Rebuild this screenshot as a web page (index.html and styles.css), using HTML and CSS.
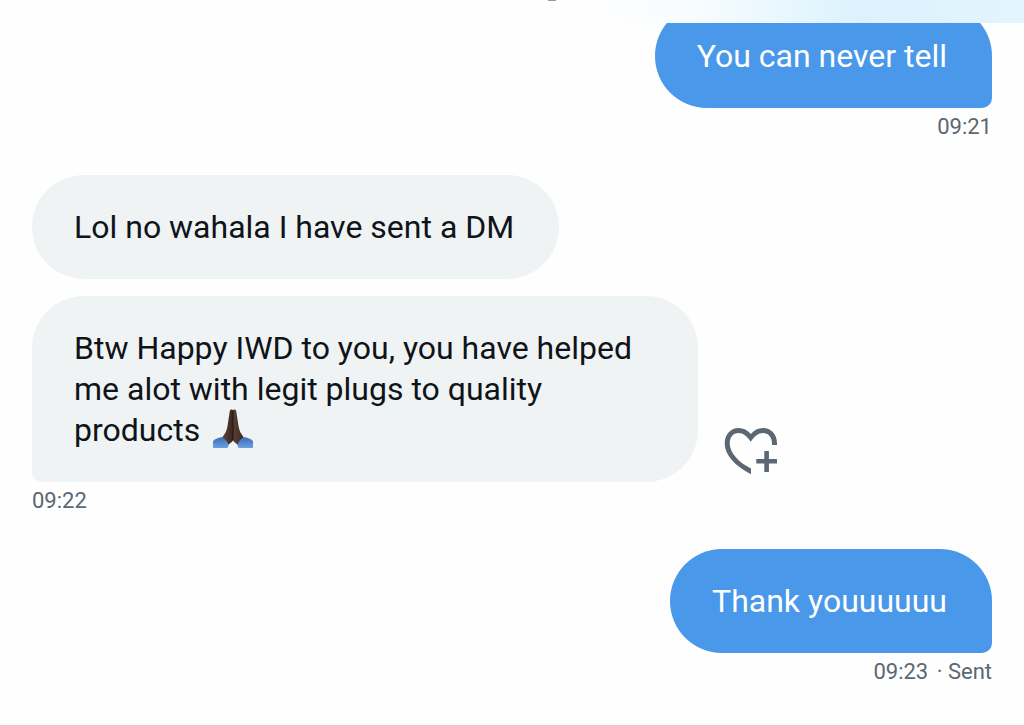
FILE: index.html
```html
<!DOCTYPE html>
<html lang="en">
<head>
    <meta charset="UTF-8">
    <meta name="viewport" content="width=device-width, initial-scale=1.0">
    <title>Messages</title>
    <link rel="stylesheet" href="styles.css">
</head>
<body>
    <header class="top-bar"><span class="top-mark"></span></header>
    <main class="chat">
        <div class="group sent">
            <p class="bubble tail">You can never tell</p>
            <div class="meta"><time>09:21</time></div>
        </div>
        <div class="group received">
            <p class="bubble">Lol no wahala I have sent a DM</p>
            <div class="row">
                <p class="bubble tail">Btw Happy IWD to you, you have helped me alot with legit plugs to quality products
                    <svg class="emoji" viewBox="0 0 40 40" role="img" aria-label="folded hands">
                        <defs>
                            <linearGradient id="sleeve" x1="0" y1="0" x2="0" y2="1">
                                <stop offset="0" stop-color="#3a6bb5"/>
                                <stop offset="1" stop-color="#6c9fe4"/>
                            </linearGradient>
                            <linearGradient id="hand" x1="0" y1="0" x2="1" y2="0">
                                <stop offset="0" stop-color="#5a4136"/>
                                <stop offset="1" stop-color="#3c2821"/>
                            </linearGradient>
                        </defs>
                        <path fill="url(#sleeve)" d="M0 32C3 29.500 7 28 11 28l5 7-1.500 4H0z"/>
                        <path fill="url(#sleeve)" d="M40 32C37 29.500 33 28 29 28L24 35l1.500 4H40z"/>
                        <path fill="url(#hand)" d="M20 1c-1-1-3-.8-3.200 1L14.500 17c-.5 4-2.500 8-5 11 2.500 2 5 5 6 7.500 2-1 3.500-3 4.500-4z"/>
                        <path fill="url(#hand)" d="M20 1c1-1 3-.8 3.200 1L25.500 17c.5 4 2.500 8 5 11-2.500 2-5 5-6 7.500-2-1-3.500-3-4.500-4z"/>
                        <path fill="none" stroke="#211410" stroke-width="1" d="M20 2v29"/>
                    </svg>
                </p>
                <button class="react" type="button" aria-label="Add reaction">
                    <svg viewBox="0 0 54 48" width="54" height="48" fill="#5b6773">
                        <path d="M53 17h-5v-1.500C48 9 44 5 39 5c-4.500 0-8.500 3-12.200 8.700C23 8 19 5 14.500 5 9.500 5 5.700 9 5.700 15.500 5.700 25 15 34.500 27 40.500v5.800C11 38 .7 27 .7 15.500.7 6 7 0 14.500 0c5 0 9 2 12.300 6C30 2 34 0 39 0c8 0 14 6 14 15.500z"/>
                        <path d="M40.300 23h4.600v8H53v4.500h-8.100V44h-4.600v-8.500h-8V31h8z"/>
                    </svg>
                </button>
            </div>
            <div class="meta"><time>09:22</time></div>
        </div>
        <div class="group sent">
            <p class="bubble tail">Thank youuuuuu</p>
            <div class="meta"><time>09:23</time> <span class="status">· Sent</span></div>
        </div>
    </main>
</body>
</html>
```
FILE: styles.css
```css
* {
    box-sizing: border-box;
}
body {
    margin: 0;
    background-color: #fefefe;
    color: #0f1419;
    font-family: Roboto, "Liberation Sans", sans-serif;
    font-size: 32px;
    line-height: 41px;
}
/* bar stays over the messages while they scroll */
.top-bar {
    position: fixed;
    top: 0;
    left: 0;
    right: 0;
    height: 23px;
    z-index: 1;
    display: flex;
    justify-content: center;
    background: linear-gradient(90deg, #fefefe 57%, #f7fcff 68%, #dcf2fe 84%, #e3f5fe 100%);
}
.top-mark {
    width: 8px;
    height: 1px;
    margin-left: 80px;
    background-color: #999;
}
.chat {
    padding: 4px 32px 32px;
}
.group {
    display: flex;
    flex-direction: column;
    align-items: flex-start;
    margin-bottom: 34px;
}
.sent {
    align-items: flex-end;
}
.bubble {
    max-width: 666px;
    margin: 0;
    padding: 32px 45px 31px 42px;
    border-radius: 52px;
    background-color: #eff3f4;
}
.sent .bubble {
    background-color: #4a98e9;
    color: #fff;
}
.sent .tail {
    border-bottom-right-radius: 10px;
}
.received .tail {
    border-bottom-left-radius: 10px;
}
.row {
    display: flex;
    align-items: flex-end;
    gap: 26px;
    margin-top: 17px;
}
.emoji {
    width: 40px;
    height: 40px;
    margin: -8px 0 -8px 5px;
    vertical-align: 0;
}
.react {
    display: flex;
    margin-bottom: 6px;
    padding: 0;
    border: 0;
    background: none;
    cursor: pointer;
}
.meta {
    margin-top: 5px;
    color: #5b6773;
    font-size: 22px;
    line-height: 28px;
}
.status {
    margin-left: 3px;
}
```
